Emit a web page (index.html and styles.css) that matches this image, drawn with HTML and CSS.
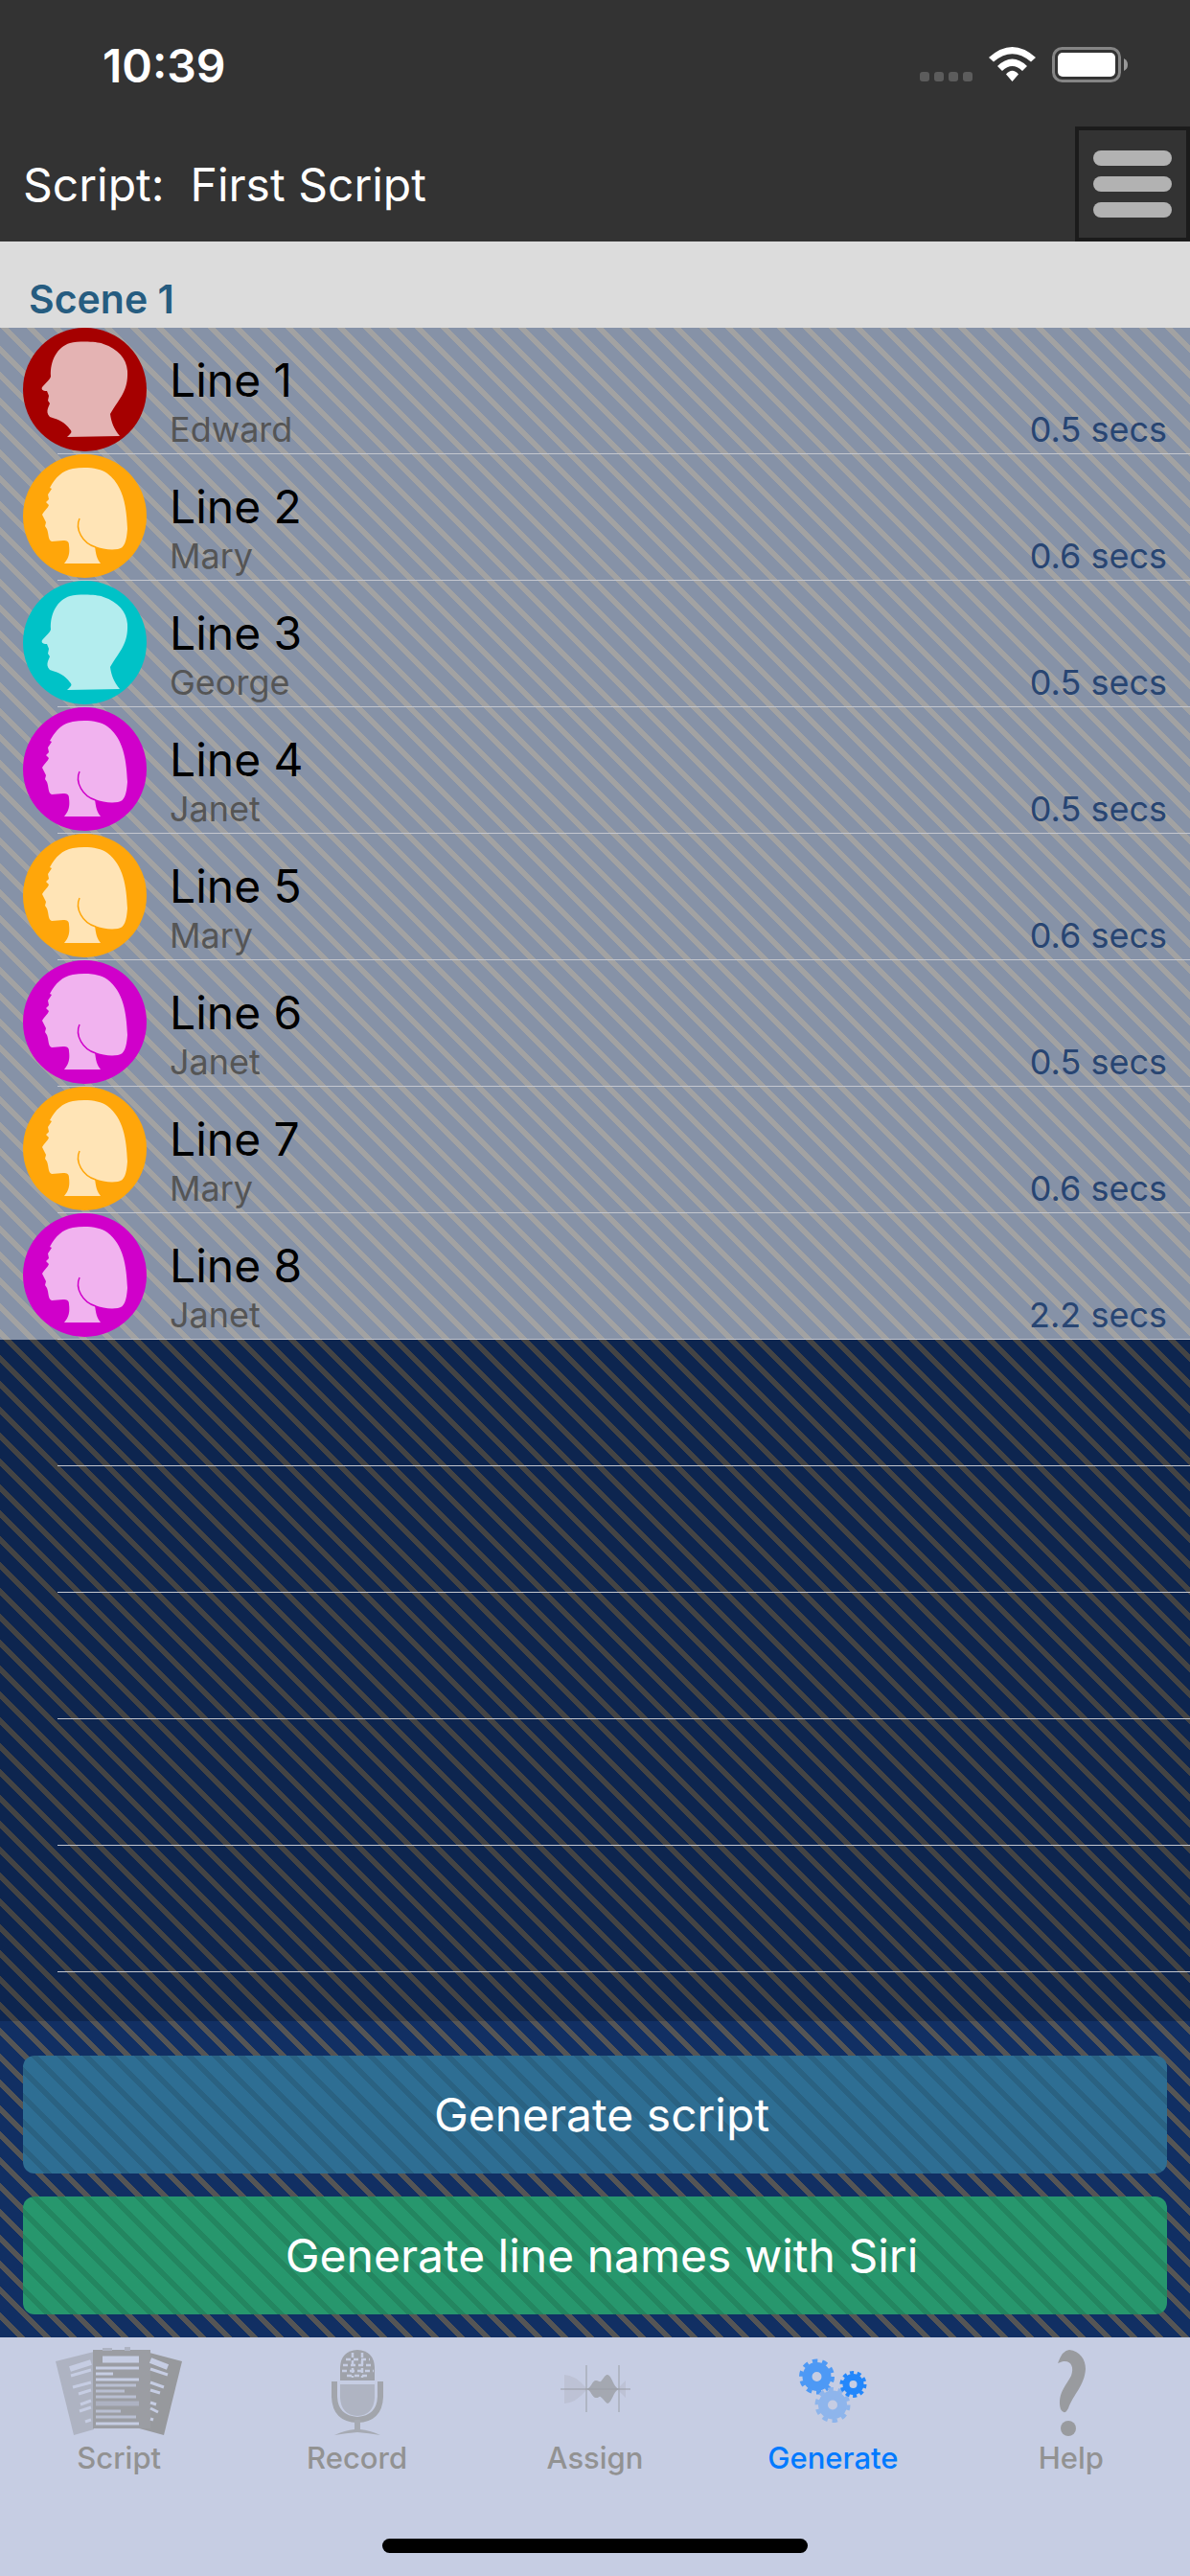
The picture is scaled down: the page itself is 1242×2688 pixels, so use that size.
FILE: index.html
```html
<!DOCTYPE html>
<html lang="en">
<head>
<meta charset="utf-8">
<meta name="viewport" content="width=device-width, initial-scale=1">
<title>First Script</title>
<link rel="stylesheet" href="styles.css">
</head>
<body>
<svg class="defs" aria-hidden="true">
  <symbol id="man" viewBox="0 0 129 129">
    <circle cx="64.500" cy="64.500" r="64.500" fill="currentColor"/>
    <path fill="#fff" fill-opacity=".7" d="M46 114C50 110 52 109 49 106C44 99 38 96 28 93C25 90 25 87 26 84L28 79L26 76L27 71L25 66C20 66 19 64 20 62C25 56 28 54 29 51C28 34 36 20 49 16C58 14 76 14 84 17C99 22 108 32 109 45C110 66 101 73 91 90C92 98 95 106 101 113Z"/>
  </symbol>
  <symbol id="woman" viewBox="0 0 129 129">
    <circle cx="64.500" cy="64.500" r="64.500" fill="currentColor"/>
    <path fill="#fff" fill-opacity=".7" d="M43 114C48 108 49 103 48 95C48 91 46 90 42 90L30 91C26 90 27 83 25 78L23 75L24 71L20 63C23 58 26 56 27 53L24 50L27 47L26 42L30 36L28 35C34 24 41 17 52 15C65 13 80 14 88 20C105 33 108 55 109 78C108 91 106 98 99 99C91 100 83 99 75 96C76 104 77 109 81 114Z"/>
    <path fill="none" stroke="currentColor" stroke-width="1.500" d="M59 67C54 78 62 93 76 97"/>
  </symbol>
</svg>

<header class="top">
  <div class="status">
    <span class="clock">10:39</span>
    <svg class="status-icons" viewBox="0 0 218 38" aria-label="Wi-Fi and battery">
      <g fill="#5c5c5c"><rect x="0" y="26" width="10" height="10" rx="3"/><rect x="15" y="26" width="10" height="10" rx="3"/><rect x="30" y="26" width="10" height="10" rx="3"/><rect x="45" y="26" width="10" height="10" rx="3"/></g>
      <g fill="#fff"><path d="M72 11Q96.500-11 121 11L116 15.500Q96.500-1 77 15.500Z"/><path d="M81 20Q96.500 5 112 20L107 25Q96.500 15 86 25Z"/><path d="M90 28.500Q96.500 21 103 28.500L96.500 36Z"/></g>
      <rect x="139.500" y="1.500" width="69" height="34" rx="9" fill="none" stroke="#858585" stroke-width="3"/>
      <rect x="144" y="6" width="60" height="25" rx="5" fill="#fff"/>
      <path d="M213 12Q217 14 217 18.500Q217 23 213 25Z" fill="#999"/>
    </svg>
  </div>
  <div class="nav">
    <h1 class="title">Script:&nbsp; First Script</h1>
    <button class="menu" type="button" aria-label="Menu"><span class="bar"></span><span class="bar"></span><span class="bar"></span></button>
  </div>
</header>

<main class="table">
  <h2 class="section">Scene 1</h2>
  <ul class="rows">
    <li class="row line"><svg class="avatar red"><use href="#man"/></svg><div class="body"><span class="name">Line 1</span><span class="actor">Edward</span></div><span class="secs">0.5 secs</span></li>
    <li class="row line"><svg class="avatar orange"><use href="#woman"/></svg><div class="body"><span class="name">Line 2</span><span class="actor">Mary</span></div><span class="secs">0.6 secs</span></li>
    <li class="row line"><svg class="avatar teal"><use href="#man"/></svg><div class="body"><span class="name">Line 3</span><span class="actor">George</span></div><span class="secs">0.5 secs</span></li>
    <li class="row line"><svg class="avatar magenta"><use href="#woman"/></svg><div class="body"><span class="name">Line 4</span><span class="actor">Janet</span></div><span class="secs">0.5 secs</span></li>
    <li class="row line"><svg class="avatar orange"><use href="#woman"/></svg><div class="body"><span class="name">Line 5</span><span class="actor">Mary</span></div><span class="secs">0.6 secs</span></li>
    <li class="row line"><svg class="avatar magenta"><use href="#woman"/></svg><div class="body"><span class="name">Line 6</span><span class="actor">Janet</span></div><span class="secs">0.5 secs</span></li>
    <li class="row line"><svg class="avatar orange"><use href="#woman"/></svg><div class="body"><span class="name">Line 7</span><span class="actor">Mary</span></div><span class="secs">0.6 secs</span></li>
    <li class="row line"><svg class="avatar magenta"><use href="#woman"/></svg><div class="body"><span class="name">Line 8</span><span class="actor">Janet</span></div><span class="secs">2.2 secs</span></li>
    <li class="row" aria-hidden="true"></li>
    <li class="row" aria-hidden="true"></li>
    <li class="row" aria-hidden="true"></li>
    <li class="row" aria-hidden="true"></li>
    <li class="row" aria-hidden="true"></li>
  </ul>
</main>

<section class="actions">
  <button class="action blue" type="button">Generate script</button>
  <button class="action green" type="button">Generate line names with Siri</button>
</section>

<footer class="bottom">
  <nav class="tabs">
    <a class="tab" href="#script">
      <svg class="icon" viewBox="0 0 132 96">
        <path fill="#aeb3c2" d="M0 17L40 7V88L19 94Z"/>
        <path fill="#97999d" d="M98 8L132 17L113 94L80 85Z"/>
        <path fill="#9b9da3" d="M39 5H99V87H39Z"/>
        <path fill="#aeb3c2" d="M49 3H59V6H49ZM72 2H78V6H72Z"/>
        <path stroke="#c6cde3" stroke-width="6" d="M15 25L37 18M99 16L117 23"/>
        <path stroke="#c6cde3" stroke-width="3" fill="none" d="M16 32L37 26M99 25L117 31M18 44L37 39M24 51L37 47M26 62L37 58M25 69L37 65M31 80L37 78M99 39L113 44M99 47L109 50M99 60L105 62M99 66L107 70M99 77L102 78"/>
        <path stroke="#c6cde3" stroke-width="7" d="M49 15H87"/>
        <path stroke="#c6cde3" stroke-width="3" d="M42 24H87M42 30H60M42 36H87M42 82H87"/>
        <path stroke="#b9bfd2" stroke-width="3" d="M42 42H84M42 48H72M42 54H84M42 69H68M42 75H84"/>
        <path stroke="#adb2c2" stroke-width="5" d="M42 61H87"/>
      </svg>
      <span>Script</span>
    </a>
    <a class="tab" href="#record">
      <svg class="icon" viewBox="0 0 60 96">
        <path fill="#9fa2aa" d="M12 37V23Q13 6 30 5Q47 6 48 23V37Z"/>
        <path stroke="#c6cde3" stroke-width="2.500" stroke-dasharray="5 3" d="M18 15H43M15 21H46M14 27H47M19 32H43M25 8V34M35 8V34"/>
        <path fill="#afb4c2" d="M12 41H48V55Q47 73 30 74Q13 73 12 55Z"/>
        <path fill="none" stroke="#a2a5ac" stroke-width="6" d="M6 38V54Q7 77 30 78Q53 77 54 54V38"/>
        <path fill="#a6aab3" d="M27 78H33V88Q43 89 54 94Q42 92 30 91Q18 92 6 94Q17 89 27 88Z"/>
      </svg>
      <span>Record</span>
    </a>
    <a class="tab" href="#assign">
      <svg class="icon" viewBox="0 0 74 96">
        <path fill="#bdc2d5" d="M5 31Q16 31 28 45V47Q16 61 5 61ZM60 46L69 37V55Z"/>
        <path fill="#a4a8b1" d="M28 46C33 45 34 37 38 37C42 37 41 40 44 37C47 33 48 31 50 31C55 32 56 44 62 46C56 48 55 60 50 61C48 60 47 58 44 55C41 52 42 55 38 55C34 55 33 47 28 46Z"/>
        <path stroke="#a9aebb" stroke-width="1.500" d="M28 21V70M62 21V70"/>
        <path stroke="#999ca4" stroke-width="1" d="M1 46H74"/>
      </svg>
      <span>Assign</span>
    </a>
    <a class="tab active" href="#generate" aria-current="page">
      <svg class="icon" viewBox="0 0 72 96">
        <g fill="none" stroke="#4d99f5"><circle cx="19.500" cy="33" r="10" stroke-width="10"/><circle cx="19.500" cy="33" r="16.500" stroke-width="4" stroke-dasharray="5.500 4.870"/></g>
        <g fill="none" stroke="#8eb5ec"><circle cx="36" cy="62.500" r="10" stroke-width="10"/><circle cx="36" cy="62.500" r="16.500" stroke-width="4" stroke-dasharray="5.500 4.870"/></g>
        <g fill="none" stroke="#2387fb"><circle cx="57.500" cy="41" r="7.500" stroke-width="7"/><circle cx="57.500" cy="41" r="12" stroke-width="4" stroke-dasharray="4 3.540"/></g>
      </svg>
      <span>Generate</span>
    </a>
    <a class="tab" href="#help">
      <svg class="icon" viewBox="0 0 40 96">
        <path fill="#999b9f" d="M6 19Q11 5 18 5C29 6 35 15 35 25C34 42 22 52 17 66Q13 74 9 67C5 51 15 42 20 32C24 21 18 13 6 19Z"/>
        <circle cx="17" cy="87" r="8" fill="#999b9f"/>
      </svg>
      <span>Help</span>
    </a>
  </nav>
  <div class="home"></div>
</footer>
</body>
</html>
```
FILE: styles.css
```css
:root {
  --stripe: #555;
  --ground: #112f63;
}

* {
  box-sizing: border-box;
}

body {
  margin: 0;
  min-height: 100vh;
  display: flex;
  flex-direction: column;
  font-family: Inter, "Liberation Sans", sans-serif;
}

body,
.action {
  background-image: linear-gradient(45deg, var(--ground) 16.67%, var(--stripe) 16.67% 33.33%, var(--ground) 33.33% 66.67%, var(--stripe) 66.67% 83.33%, var(--ground) 83.33%);
  background-size: 27px 27px;
}

.defs {
  display: none;
}

.top {
  background: #333;
  color: #fff;
}

.status {
  height: 132px;
  padding: 4px 64px 0 107px;
  display: flex;
  align-items: center;
  justify-content: space-between;
}

.clock {
  font-size: 48px;
  font-weight: 600;
}

.status-icons {
  width: 218px;
  height: 38px;
}

.nav {
  height: 120px;
  padding-left: 24px;
  display: flex;
  align-items: center;
  justify-content: space-between;
}

.title {
  margin: 0;
  font-size: 48px;
  font-weight: 400;
}

.menu {
  width: 120px;
  height: 120px;
  padding: 0 15px;
  border: 4px solid #1b1b1b;
  background: none;
  display: flex;
  flex-direction: column;
  justify-content: center;
  gap: 11px;
}

.bar {
  height: 16px;
  border-radius: 8px;
  background: #b2b2b2;
}

.table {
  flex: 1;
  background: rgba(0, 0, 0, 0.2);
}

.section {
  margin: 0;
  height: 90px;
  padding: 40px 30px 0;
  background: #dcdcdc;
  color: #265c80;
  font-size: 41px;
  line-height: 40px;
  font-weight: 600;
}

.rows {
  margin: 0;
  padding: 0;
  list-style: none;
}

.row {
  height: 132px;
  padding: 0 24px;
  display: flex;
  gap: 24px;
  background: linear-gradient(#c4c7cf, #c4c7cf) 60px 100% / 100% 1px no-repeat;
}

.line {
  background-color: rgba(255, 255, 255, 0.5);
}

.avatar {
  width: 129px;
  height: 129px;
  flex: none;
}

.red { color: #a50000; }
.orange { color: #ffa60a; }
.teal { color: #00c2c7; }
.magenta { color: #d000ca; }

.body {
  flex: 1;
  padding-top: 24px;
  display: flex;
  flex-direction: column;
}

.name {
  color: #000;
  font-size: 48px;
  line-height: 62px;
}

.actor,
.secs {
  font-size: 36px;
  line-height: 40px;
  color: #555;
}

.secs {
  align-self: flex-end;
  padding-bottom: 6px;
  color: #284572;
}

.actions {
  padding: 36px 24px 24px;
  display: flex;
  flex-direction: column;
  gap: 24px;
}

.action {
  height: 123px;
  padding: 0 6px 0 20px;
  border: 0;
  border-radius: 12px;
  color: #fff;
  font-family: inherit;
  font-size: 48px;
  background-position: -2px 0;
}

.blue {
  --ground: #2e6e93;
  --stripe: #2a6282;
}

.green {
  --ground: #27976d;
  --stripe: #238660;
}

.bottom {
  height: 249px;
  background: #c6cde3;
  display: flex;
  flex-direction: column;
  justify-content: space-between;
  align-items: center;
}

.tabs {
  width: 100%;
  display: grid;
  grid-template-columns: repeat(5, 1fr);
}

.tab {
  padding-top: 8px;
  display: flex;
  flex-direction: column;
  align-items: center;
  gap: 4px;
  color: #929292;
  font-size: 31px;
  line-height: 36px;
  font-weight: 500;
  text-decoration: none;
}

.active {
  color: #007aff;
}

.icon {
  height: 96px;
}

.home {
  width: 444px;
  height: 15px;
  margin-bottom: 24px;
  border-radius: 8px;
  background: #000;
}
```
